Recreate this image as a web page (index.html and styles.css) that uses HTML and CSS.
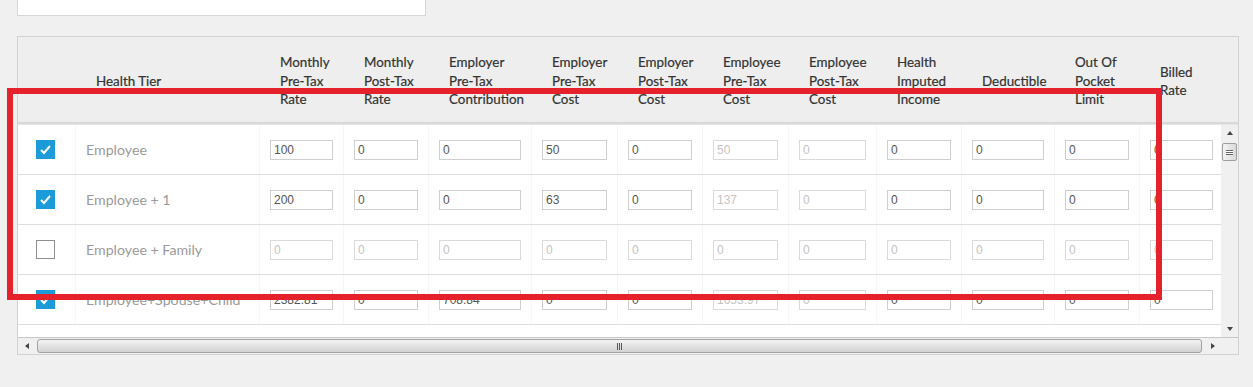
FILE: index.html
```html
<!DOCTYPE html>
<html lang="en">
<head>
    <meta charset="UTF-8">
    <title>Health Tiers</title>
    <link rel="stylesheet" href="styles.css">
</head>
<body>
    <div class="top-box"></div>

    <div class="panel">
        <div class="grid-row grid-head">
            <div class="hcell"></div>
            <div class="hcell">Health Tier</div>
            <div class="hcell">Monthly<br>Pre-Tax<br>Rate</div>
            <div class="hcell">Monthly<br>Post-Tax<br>Rate</div>
            <div class="hcell">Employer<br>Pre-Tax<br>Contribution</div>
            <div class="hcell">Employer<br>Pre-Tax<br>Cost</div>
            <div class="hcell">Employer<br>Post-Tax<br>Cost</div>
            <div class="hcell">Employee<br>Pre-Tax<br>Cost</div>
            <div class="hcell">Employee<br>Post-Tax<br>Cost</div>
            <div class="hcell">Health<br>Imputed<br>Income</div>
            <div class="hcell">Deductible</div>
            <div class="hcell">Out Of<br>Pocket<br>Limit</div>
            <div class="hcell">Billed<br>Rate</div>
        </div>

        <div class="grid-body">
            <div class="rows">
                <div class="grid-row">
                    <div class="cell"><span class="tick on"><svg viewBox="0 0 19 19"><path d="M5 10 L8 13 L14 6" /></svg></span></div>
                    <div class="cell tier">Employee</div>
                    <div class="cell"><input class="num" value="100"></div>
                    <div class="cell"><input class="num" value="0"></div>
                    <div class="cell"><input class="num" value="0"></div>
                    <div class="cell"><input class="num" value="50"></div>
                    <div class="cell"><input class="num" value="0"></div>
                    <div class="cell"><input class="num" value="50" disabled></div>
                    <div class="cell"><input class="num" value="0" disabled></div>
                    <div class="cell"><input class="num" value="0"></div>
                    <div class="cell"><input class="num" value="0"></div>
                    <div class="cell"><input class="num" value="0"></div>
                    <div class="cell"><input class="num" value="0"></div>
                </div>
                <div class="grid-row">
                    <div class="cell"><span class="tick on"><svg viewBox="0 0 19 19"><path d="M5 10 L8 13 L14 6" /></svg></span></div>
                    <div class="cell tier">Employee + 1</div>
                    <div class="cell"><input class="num" value="200"></div>
                    <div class="cell"><input class="num" value="0"></div>
                    <div class="cell"><input class="num" value="0"></div>
                    <div class="cell"><input class="num" value="63"></div>
                    <div class="cell"><input class="num" value="0"></div>
                    <div class="cell"><input class="num" value="137" disabled></div>
                    <div class="cell"><input class="num" value="0" disabled></div>
                    <div class="cell"><input class="num" value="0"></div>
                    <div class="cell"><input class="num" value="0"></div>
                    <div class="cell"><input class="num" value="0"></div>
                    <div class="cell"><input class="num" value="0"></div>
                </div>
                <div class="grid-row">
                    <div class="cell"><span class="tick"></span></div>
                    <div class="cell tier">Employee + Family</div>
                    <div class="cell"><input class="num" value="0" disabled></div>
                    <div class="cell"><input class="num" value="0" disabled></div>
                    <div class="cell"><input class="num" value="0" disabled></div>
                    <div class="cell"><input class="num" value="0" disabled></div>
                    <div class="cell"><input class="num" value="0" disabled></div>
                    <div class="cell"><input class="num" value="0" disabled></div>
                    <div class="cell"><input class="num" value="0" disabled></div>
                    <div class="cell"><input class="num" value="0" disabled></div>
                    <div class="cell"><input class="num" value="0" disabled></div>
                    <div class="cell"><input class="num" value="0" disabled></div>
                    <div class="cell"><input class="num" value="0" disabled></div>
                </div>
                <div class="grid-row">
                    <div class="cell"><span class="tick on"><svg viewBox="0 0 19 19"><path d="M5 10 L8 13 L14 6" /></svg></span></div>
                    <div class="cell tier">Employee+Spouse+Child</div>
                    <div class="cell"><input class="num" value="2382.81"></div>
                    <div class="cell"><input class="num" value="0"></div>
                    <div class="cell"><input class="num" value="708.84"></div>
                    <div class="cell"><input class="num" value="0"></div>
                    <div class="cell"><input class="num" value="0"></div>
                    <div class="cell"><input class="num" value="1653.97" disabled></div>
                    <div class="cell"><input class="num" value="0" disabled></div>
                    <div class="cell"><input class="num" value="0"></div>
                    <div class="cell"><input class="num" value="0"></div>
                    <div class="cell"><input class="num" value="0"></div>
                    <div class="cell"><input class="num" value="0"></div>
                </div>
            </div>
            <div class="vscroll">
                <div class="sbtn"><span class="arrow up"></span></div>
                <div class="vtrack"><div class="vthumb"><span class="grip-h"></span></div></div>
                <div class="sbtn"><span class="arrow down"></span></div>
            </div>
        </div>

        <div class="hscroll">
            <div class="sbtn"><span class="arrow left"></span></div>
            <div class="htrack"><div class="hthumb"><span class="grip-v"></span></div></div>
            <div class="sbtn"><span class="arrow right"></span></div>
            <div class="corner"></div>
        </div>
    </div>

    <div class="marker"></div>
</body>
</html>
```

FILE: styles.css
```css
body {
    margin: 0;
    background-color: #f0f0f0;
    font-family: 'Lato', 'Open Sans', sans-serif;
    font-size: 13px;
}
.top-box {
    margin-left: 17px;
    width: 409px;
    height: 16px;
    box-sizing: border-box;
    background-color: #fff;
    border: 1px solid #d6d6d6;
    border-top: none;
}
.panel {
    margin: 20px 0 0 17px;
    width: 1222px;
    box-sizing: border-box;
    border: 1px solid #d2d2d2;
    background-color: #fff;
}
.grid-row {
    display: grid;
    grid-template-columns: 57px 184px 84px 85px 103px 86px 85px 86px 88px 85px 93px 85px 84px;
}
.grid-head {
    grid-template-columns: 57px 184px 84px 85px 103px 86px 85px 86px 88px 85px 93px 85px 1fr;
    height: 87px;
    padding-top: 3px;
    box-sizing: border-box;
    background-color: #eeeeee;
    border-bottom: 2px solid #d9d9d9;
    align-items: center;
    color: #333;
}
.hcell {
    padding-left: 21px;
    font-size: 13.4px;
    line-height: 18.5px;
    -webkit-text-stroke: 0.2px #333;
}
.grid-body {
    display: flex;
    height: 212px;
    border-top: 1px solid #e6e6e6;
}
.rows {
    flex: 1;
    overflow: hidden;
}
.rows .grid-row {
    height: 50px;
    box-sizing: border-box;
    border-bottom: 1px solid #dedede;
}
.cell {
    display: flex;
    align-items: center;
    padding-left: 10px;
    border-left: 1px solid #f6f6f6;
}
.cell:first-child {
    padding-left: 18px;
    border-left: none;
}
.tier {
    color: #9a9a9a;
    font-size: 14.2px;
}
.tick {
    width: 19px;
    height: 19px;
    box-sizing: border-box;
    border: 1px solid #8f8f8f;
    background-color: #fff;
}
.tick.on {
    border: none;
    background-color: #1b9bd8;
}
.tick svg {
    display: block;
    width: 19px;
    height: 19px;
    fill: none;
    stroke: #fff;
    stroke-width: 2;
}
.num {
    width: calc(100% - 10px);
    height: 20px;
    box-sizing: border-box;
    border: 1px solid #cfcfcf;
    padding: 0 3px;
    font-family: 'Liberation Sans', sans-serif;
    font-size: 12px;
    color: #555;
    background-color: #fff;
    outline: none;
}
.num:disabled {
    color: #c4c4c4;
    border-color: #dadada;
}

/* scrollbars */
.vscroll {
    width: 17px;
    display: flex;
    flex-direction: column;
    background-color: #f0f0f0;
}
.sbtn {
    width: 17px;
    height: 16px;
    display: flex;
    align-items: center;
    justify-content: center;
}
.vtrack {
    flex: 1;
    padding: 2px 1px;
}
.vthumb {
    height: 18px;
    box-sizing: border-box;
    border: 1px solid #9e9e9e;
    border-radius: 2px;
    background: linear-gradient(to right, #f4f4f4, #d8d8d8);
    display: flex;
    align-items: center;
    justify-content: center;
}
.grip-h {
    width: 7px;
    height: 5px;
    border-top: 1px solid #666;
    border-bottom: 1px solid #666;
    box-sizing: border-box;
    background: linear-gradient(#fff 0 1px, #666 1px 2px, #fff 2px);
    background-size: 100% 3px;
}
.hscroll {
    display: flex;
    height: 16px;
    background-color: #f0f0f0;
    border-top: 1px solid #c8c8c8;
}
.htrack {
    flex: 1;
    padding: 1px 2px;
}
.hthumb {
    height: 100%;
    box-sizing: border-box;
    border: 1px solid #a2a2a2;
    border-radius: 3px;
    background: linear-gradient(#f3f3f3, #d2d2d2);
    display: flex;
    align-items: center;
    justify-content: center;
}
.grip-v {
    width: 5px;
    height: 7px;
    border-left: 1px solid #555;
    border-right: 1px solid #555;
    box-sizing: border-box;
    background: linear-gradient(to right, transparent 1px, #555 1px 2px, transparent 2px);
}
.corner {
    width: 17px;
}
.arrow {
    width: 0;
    height: 0;
    border: 3px solid transparent;
}
.arrow.up { border-bottom: 4px solid #444; border-top: none; }
.arrow.down { border-top: 4px solid #444; border-bottom: none; }
.arrow.left { border-right: 4px solid #444; border-left: none; }
.arrow.right { border-left: 4px solid #444; border-right: none; }

/* red annotation box drawn over the table */
.marker {
    position: absolute;
    left: 7px;
    top: 88px;
    width: 1155px;
    height: 212px;
    box-sizing: border-box;
    border: 6px solid #e5212b;
}
```
